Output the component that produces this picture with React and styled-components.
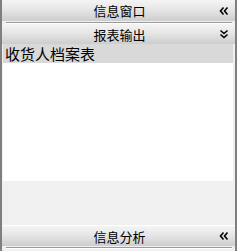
import React from 'react'
import styled, { createGlobalStyle } from 'styled-components'

const Global = createGlobalStyle`
  html, body {
    margin: 0;
    padding: 0;
    background: #f0f0f0;
  }
  body {
    font-family: "Noto Sans CJK SC", "DejaVu Sans", sans-serif;
  }
`

const Frame = styled.div`
  width: 237px;
  height: 251px;
  box-sizing: border-box;
  border-left: 2px solid #7f7f7f;
  border-right: 2px solid #7f7f7f;
  background: #f0f0f0;
  display: flex;
  flex-direction: column;
  overflow: hidden;
`

const Header = styled.div`
  position: relative;
  height: ${(p) => p.$h}px;
  flex: none;
  display: flex;
  align-items: center;
  justify-content: center;
  box-sizing: border-box;
  border-top: ${(p) => (p.$highlight ? '1px solid #ffffff' : 'none')};
  background: linear-gradient(to bottom, #f4f4f4 0%, #e6e6e6 45%, #cdcdcd 100%);
  font-size: 13px;
  color: #000;
  line-height: 1;
`

const Title = styled.span`
  padding-left: 2px;
`

const Toggle = styled.span`
  position: absolute;
  right: 6px;
  top: 50%;
  transform: translateY(-50%);
  display: flex;
`

const Divider = styled.div`
  flex: none;
  height: 3px;
  padding: 0 3px 0 4px;
  box-sizing: border-box;
  display: flex;
  flex-direction: column;
  justify-content: flex-end;

  &::before {
    content: '';
    display: block;
    height: 1px;
    background: #9a9a9a;
  }
  &::after {
    content: '';
    display: block;
    height: 1px;
    background: #ffffff;
  }
`

const List = styled.div`
  flex: none;
  height: 137px;
  margin: 0 2px 0 1px;
  background: #ffffff;
`

const Item = styled.div`
  height: 19px;
  display: flex;
  align-items: center;
  padding-left: 2px;
  background: ${(p) => (p.$selected ? '#d9d9d9' : 'transparent')};
  font-size: 15px;
  color: #000;
  line-height: 1;
`

const Filler = styled.div`
  flex: 1;
`

const BottomGap = styled.div`
  flex: none;
  height: 2px;
`

const Chevrons = ({ down }) => (
  <svg
    width="10"
    height="9"
    viewBox="0 0 10 9"
    style={down ? { transform: 'rotate(-90deg)' } : undefined}
  >
    <polyline points="4.5,1 1.5,4.5 4.5,8" fill="none" stroke="#000" strokeWidth="1.6" />
    <polyline points="8.5,1 5.5,4.5 8.5,8" fill="none" stroke="#000" strokeWidth="1.6" />
  </svg>
)

const App = () => {
  return (
    <>
      <Global />
      <Frame>
        <Header $h={21}>
          <Title>信息窗口</Title>
          <Toggle>
            <Chevrons />
          </Toggle>
        </Header>
        <Divider />
        <Header $h={20}>
          <Title>报表输出</Title>
          <Toggle>
            <Chevrons down />
          </Toggle>
        </Header>
        <List>
          <Item $selected>收货人档案表</Item>
        </List>
        <Filler />
        <Header $h={21} $highlight>
          <Title>信息分析</Title>
          <Toggle>
            <Chevrons />
          </Toggle>
        </Header>
        <Divider />
        <BottomGap />
      </Frame>
    </>
  )
}

export default App
